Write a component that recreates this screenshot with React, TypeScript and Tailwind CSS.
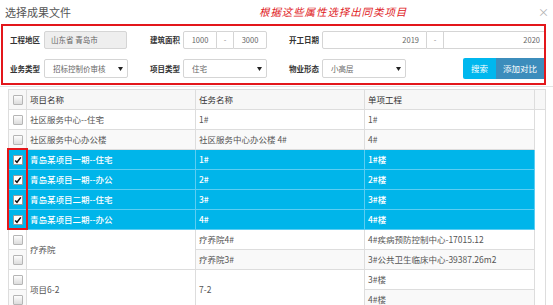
import React from "react";

const FONT = { fontFamily: '"Noto Sans CJK SC", "Noto Sans", sans-serif' };

function Box({ checked }: { checked?: boolean }) {
  if (checked) {
    return (
      <div className="w-[10px] h-[10px] border border-[#9a9a9a] rounded-[1px] bg-white flex items-center justify-center">
        <svg width="8" height="8" viewBox="0 0 8 8">
          <path d="M1.2 4.4 L3 6.3 L6.8 1.4" stroke="#111" strokeWidth="1.5" fill="none" />
        </svg>
      </div>
    );
  }
  return (
    <div className="w-[10px] h-[10px] border border-[#b5b5b5] rounded-[1px] bg-gradient-to-b from-[#fdfdfd] to-[#dcdcdc]" />
  );
}

function Caret() {
  return (
    <svg width="5" height="4" viewBox="0 0 5 4">
      <path d="M0 0 L5 0 L2.5 4 Z" fill="#222" />
    </svg>
  );
}

export default function App() {
  const cell = "border-r border-b border-[#dddddd] flex items-center pl-[3px] overflow-hidden whitespace-nowrap";
  const sel = "border-r border-b border-[#5ccdf2] flex items-center pl-[3px] overflow-hidden whitespace-nowrap bg-[#00b5ea] text-white font-medium";
  const cbCell = "border-r border-b border-[#dddddd] flex items-center justify-center";
  const cbSel = "border-r border-b border-[#5ccdf2] flex items-center justify-center bg-[#00b5ea]";

  const normal = (name: string, task: string, item: string, gray: boolean) => [
    <div key="c" className={`${cbCell} ${gray ? "bg-[#f9f9f9]" : "bg-white"}`}><Box /></div>,
    <div key="a" className={`${cell} ${gray ? "bg-[#f9f9f9]" : "bg-white"}`}>{name}</div>,
    <div key="b" className={`${cell} ${gray ? "bg-[#f9f9f9]" : "bg-white"}`}>{task}</div>,
    <div key="d" className={`${cell} ${gray ? "bg-[#f9f9f9]" : "bg-white"}`}>{item}</div>,
  ];
  const selected = (name: string, task: string, item: string) => [
    <div key="c" className={cbSel}><Box checked /></div>,
    <div key="a" className={sel}>{name}</div>,
    <div key="b" className={sel}>{task}</div>,
    <div key="d" className={sel}>{item}</div>,
  ];

  return (
    <div className="w-[553px] h-[305px] overflow-hidden bg-white relative text-[#555]" style={FONT}>
      {/* header */}
      <div className="h-[24px] flex items-center pl-[5px] pr-[4px]">
        <span className="text-[11px] text-[#555] leading-none">选择成果文件</span>
        <span className="ml-[188px] text-[10.5px] tracking-[0.9px] text-[#e0201c] italic leading-none">根据这些属性选择出同类项目</span>
        <span className="ml-auto text-[11px] text-[#b0b0b0] leading-none">×</span>
      </div>

      {/* filter box */}
      <div className="ml-[1px] w-[545px] h-[61px] border-2 border-[#e3171b] pt-[5px] text-[7.5px]">
        <div className="flex items-center h-[18px]">
          <span className="w-[37px] text-right font-bold text-[#333]">工程地区</span>
          <div className="ml-[4px] w-[83px] h-[18px] border border-[#d5d5d5] rounded-[2px] bg-[#eeeeee] flex items-center pl-[6px] text-[#666]">山东省 青岛市</div>
          <span className="w-[53px] text-right font-bold text-[#333]">建筑面积</span>
          <div className="ml-[3px] w-[84px] h-[18px] flex">
            <div className="w-[34px] border border-[#d5d5d5] rounded-l-[2px] flex items-center justify-center text-[#666]">1000</div>
            <div className="w-[16px] border-y border-[#d5d5d5] flex items-center justify-center text-[#888]">-</div>
            <div className="flex-1 border border-[#d5d5d5] rounded-r-[2px] flex items-center justify-center text-[#666]">3000</div>
          </div>
          <span className="w-[52px] text-right font-bold text-[#333]">开工日期</span>
          <div className="ml-[3px] flex-1 h-[18px] flex">
            <div className="w-[105px] border border-[#d5d5d5] rounded-l-[2px] flex items-center justify-end pr-[7px] text-[#666]">2019</div>
            <div className="w-[16px] border-y border-[#d5d5d5] flex items-center justify-center text-[#888]">-</div>
            <div className="flex-1 border-y border-l border-[#d5d5d5] flex items-center justify-end pr-[4px] text-[#666]">2020</div>
          </div>
        </div>
        <div className="flex items-center h-[21px] mt-[9px]">
          <span className="w-[37px] text-right font-bold text-[#333]">业务类型</span>
          <div className="ml-[4px] w-[84px] h-[19px] border border-[#d5d5d5] rounded-[2px] bg-white flex items-center pl-[8px] pr-[4px] text-[#666]">
            <span>招标控制价审核</span><span className="ml-auto flex"><Caret /></span>
          </div>
          <span className="w-[52px] text-right font-bold text-[#333]">项目类型</span>
          <div className="ml-[3px] w-[84px] h-[19px] border border-[#d5d5d5] rounded-[2px] bg-white flex items-center pl-[8px] pr-[4px] text-[#666]">
            <span>住宅</span><span className="ml-auto flex"><Caret /></span>
          </div>
          <span className="w-[52px] text-right font-bold text-[#333]">物业形态</span>
          <div className="ml-[3px] w-[84px] h-[19px] border border-[#d5d5d5] rounded-[2px] bg-white flex items-center pl-[8px] pr-[4px] text-[#666]">
            <span>小高层</span><span className="ml-auto flex"><Caret /></span>
          </div>
          <div className="ml-auto flex h-[21px]">
            <div className="w-[33px] bg-[#00b7ee] rounded-l-[2px] text-white text-[8.5px] flex items-center justify-center">搜索</div>
            <div className="w-[48px] bg-[#3c8dbc] text-white text-[8.5px] flex items-center justify-center">添加对比</div>
          </div>
        </div>
      </div>
      <div className="h-[1px] mt-[1px] bg-[#e3e3e3]" />

      {/* table */}
      <div className="mt-[2px] ml-[8px] w-[538px] border-l border-t border-[#dddddd] grid grid-cols-[18px_169px_169px_170px_11px] grid-rows-[repeat(11,20px)] text-[8.5px]">
        <div className="col-start-5 row-start-2 row-span-10 border-r border-[#dddddd] bg-white" />
        <div className={`${cbCell} bg-[#f7f7f7]`}><Box /></div>
        <div className={`${cell} bg-[#f7f7f7] text-[#333]`}>项目名称</div>
        <div className={`${cell} bg-[#f7f7f7] text-[#333]`}>任务名称</div>
        <div className={`${cell} bg-[#f7f7f7] text-[#333]`}>单项工程</div>
        <div className="border-r border-b border-[#dddddd] bg-[#f7f7f7]" />

        {normal("社区服务中心--住宅", "1#", "1#", false)}
        {normal("社区服务中心办公楼", "社区服务中心办公楼 4#", "4#", true)}
        {selected("青岛某项目一期--住宅", "1#", "1#楼")}
        {selected("青岛某项目一期--办公", "2#", "2#楼")}
        {selected("青岛某项目二期--住宅", "3#", "3#楼")}
        {selected("青岛某项目二期--办公", "4#", "4#楼")}

        <div className={`${cbCell} bg-white`}><Box /></div>
        <div className={`${cell} bg-white row-span-2`}>疗养院</div>
        <div className={`${cell} bg-white`}>疗养院4#</div>
        <div className={`${cell} bg-white`}>4#疾病预防控制中心-17015.12</div>
        <div className={`${cbCell} bg-[#f9f9f9]`}><Box /></div>
        <div className={`${cell} bg-[#f9f9f9]`}>疗养院3#</div>
        <div className={`${cell} bg-[#f9f9f9]`}>3#公共卫生临床中心-39387.26m2</div>

        <div className={`${cbCell} bg-white`}><Box /></div>
        <div className={`${cell} bg-white row-span-2`}>项目6-2</div>
        <div className={`${cell} bg-white row-span-2`}>7-2</div>
        <div className={`${cell} bg-white`}>3#楼</div>
        <div className={`${cbCell} bg-[#f9f9f9]`}><Box /></div>
        <div className={`${cell} bg-[#f9f9f9]`}>4#楼</div>
      </div>

      {/* annotation box around checked boxes */}
      <div className="absolute left-[7px] top-[148px] w-[21px] h-[82px] border-2 border-[#e3171b]" />
    </div>
  );
}
